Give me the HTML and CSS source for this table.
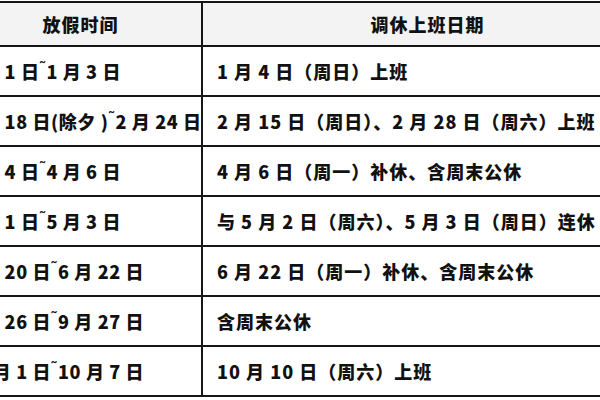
FILE: index.html
```html
<!DOCTYPE html>
<html lang="zh-CN">
<head>
<meta charset="utf-8">
<title>2015 放假安排</title>
<link rel="stylesheet" href="styles.css">
</head>
<body>
<table class="holiday">
  <thead>
    <tr>
      <th class="col-a">放假时间</th>
      <th class="col-b">调休上班日期</th>
    </tr>
  </thead>
  <tbody>
    <tr><td class="col-a">1 月 1 日<span class="tl">˜</span>1 月 3 日</td><td class="col-b">1 月 4 日（周日）上班</td></tr>
    <tr><td class="col-a">2 月 18 日(除夕 )<span class="tl">˜</span>2 月 24 日</td><td class="col-b">2 月 15 日（周日）、2 月 28 日（周六）上班</td></tr>
    <tr><td class="col-a">4 月 4 日<span class="tl">˜</span>4 月 6 日</td><td class="col-b">4 月 6 日（周一）补休、含周末公休</td></tr>
    <tr><td class="col-a">5 月 1 日<span class="tl">˜</span>5 月 3 日</td><td class="col-b">与 5 月 2 日（周六）、5 月 3 日（周日）连休</td></tr>
    <tr><td class="col-a">6 月 20 日<span class="tl">˜</span>6 月 22 日</td><td class="col-b">6 月 22 日（周一）补休、含周末公休</td></tr>
    <tr><td class="col-a">9 月 26 日<span class="tl">˜</span>9 月 27 日</td><td class="col-b">含周末公休</td></tr>
    <tr><td class="col-a">10 月 1 日<span class="tl">˜</span>10 月 7 日</td><td class="col-b">10 月 10 日（周六）上班</td></tr>
  </tbody>
</table>
</body>
</html>
```
FILE: styles.css
```css
html, body {
  margin: 0;
  padding: 0;
  background: #ffffff;
  overflow: hidden;
}
body {
  width: 600px;
  height: 400px;
  font-family: "Noto Sans CJK SC", "Noto Sans", sans-serif;
  color: #111111;
}
.holiday {
  border-collapse: collapse;
  table-layout: fixed;
  width: 692px;
  margin-top: 1px;
  margin-left: -42px;
  font-size: 18px;
  font-weight: 900;
  letter-spacing: 1px;
}
.holiday th,
.holiday td {
  border: 2px solid #161616;
  padding: 0;
  white-space: nowrap;
  overflow: hidden;
}
.holiday th {
  height: 42px;
  background: #f3f3f3;
  text-align: center;
  font-weight: 900;
}
.holiday td {
  height: 48px;
  text-align: left;
  background: #ffffff;
}
.col-a {
  width: 241px;
}
.col-b {
  width: 449px;
}
td.col-a {
  padding-left: 5px;
  letter-spacing: 0.6px;
}
td.col-b {
  padding-left: 14px;
}
.tl {
  display: inline-block;
  font-family: "DejaVu Sans", sans-serif;
  font-size: 16px;
  transform: translateY(-6px);
  margin: 0 0 0 -1px;
  letter-spacing: 0;
}
```
